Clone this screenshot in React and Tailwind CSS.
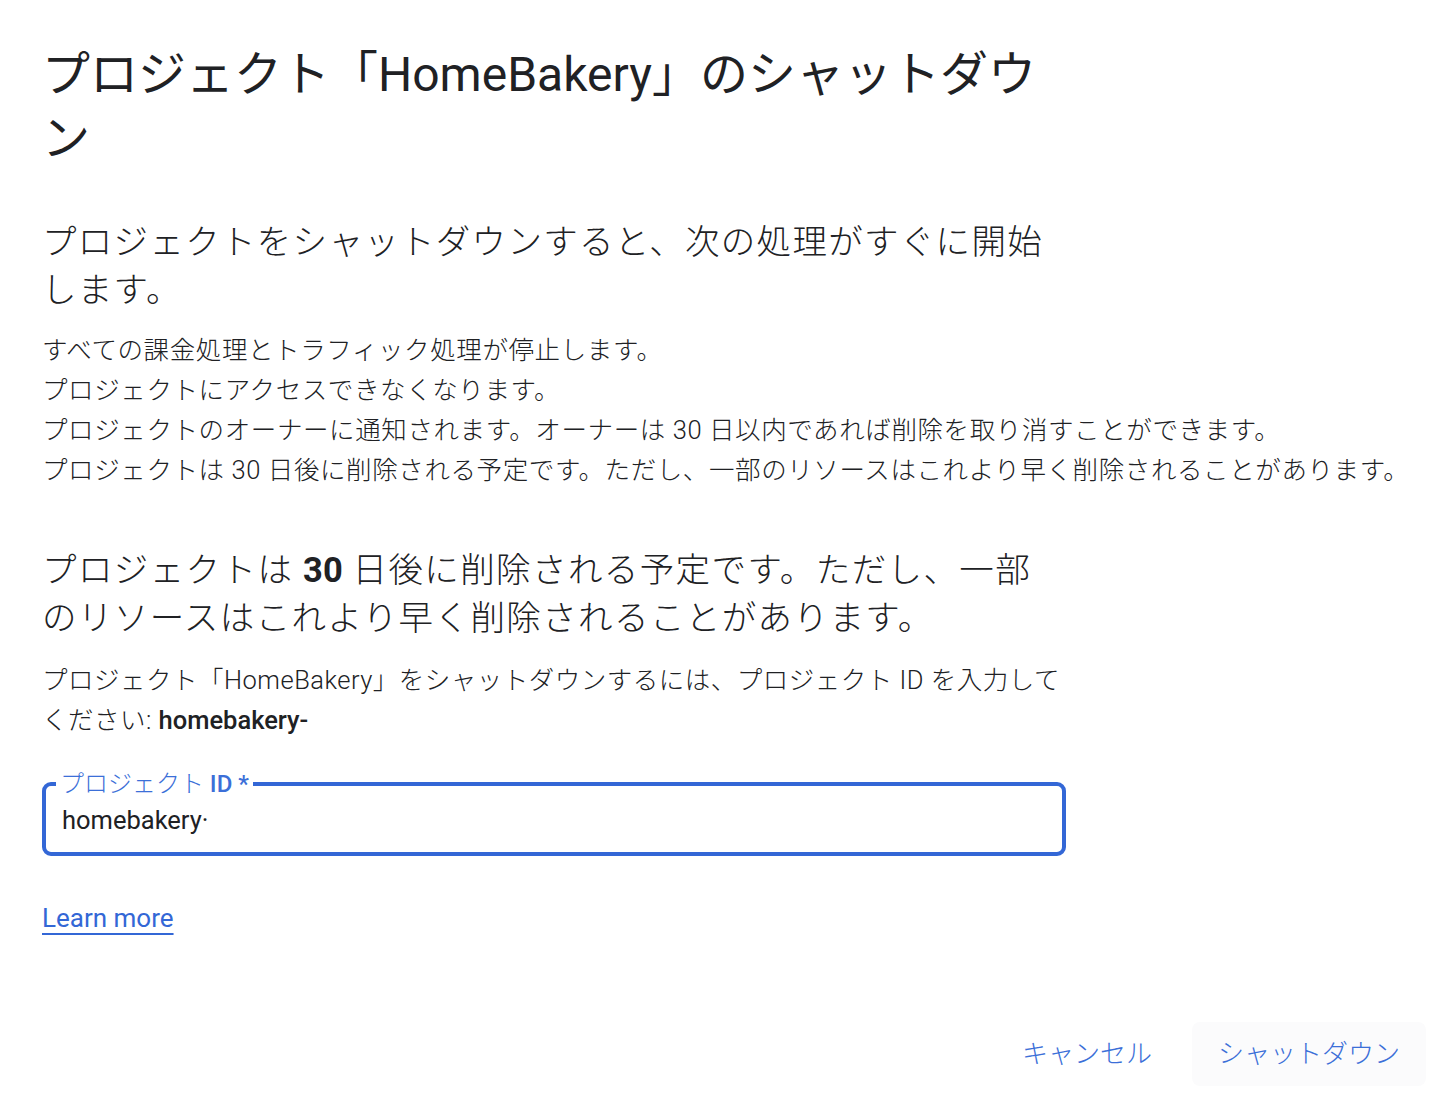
import React from 'react';

const font = { fontFamily: 'Roboto, "Noto Sans CJK JP", sans-serif' };

const App = () => {
  return (
    <div className="min-h-[1120px] bg-white text-[#202124]" style={font}>
      <div className="pl-[42px] pt-[43px]">
        {/* Title */}
        <h1 className="max-w-[1024px] text-[48px] leading-[64px] font-normal">
          プロジェクト「HomeBakery」のシャットダウン
        </h1>

        {/* What happens */}
        <h2 className="mt-[47px] text-[34.5px] leading-[48px] font-light tracking-[1.3px]">
          プロジェクトをシャットダウンすると、次の処理がすぐに開始
          <br />
          します。
        </h2>
        <div className="mt-[16px] text-[25.5px] leading-[40px] font-light tracking-[0.6px] text-[#202124]">
          <p>すべての課金処理とトラフィック処理が停止します。</p>
          <p>プロジェクトにアクセスできなくなります。</p>
          <p>プロジェクトのオーナーに通知されます。オーナーは 30 日以内であれば削除を取り消すことができます。</p>
          <p>プロジェクトは 30 日後に削除される予定です。ただし、一部のリソースはこれより早く削除されることがあります。</p>
        </div>

        <h2 className="mt-[56px] text-[34.5px] leading-[48px] font-light tracking-[1.4px]">
          プロジェクトは <span className="font-bold tracking-normal">30</span> 日後に削除される予定です。ただし、一部
          <br />
          のリソースはこれより早く削除されることがあります。
        </h2>

        <p className="mt-[18px] text-[25.5px] leading-[40px] font-light tracking-[0.5px] text-[#202124]">
          プロジェクト「HomeBakery」をシャットダウンするには、プロジェクト ID を入力して
          <br />
          ください: <span className="font-medium tracking-normal">homebakery-</span>
        </p>

        {/* Project ID field */}
        <fieldset className="mt-[30px] w-[1024px] h-[86px] border-4 border-[#3367d6] rounded-[9px] px-[16px] pt-[6px]">
          <legend className="ml-[-6px] px-[4px] text-[24px] leading-[28px] text-[#3b6fd8] font-light">
            プロジェクト <span className="font-medium">ID *</span>
          </legend>
          <div className="text-[25.5px] leading-[32px] text-[#202124]">homebakery·</div>
        </fieldset>

        <a href="#" className="inline-block mt-[46px] text-[26px] leading-[32px] text-[#3367d6] underline decoration-2 underline-offset-[6px]">
          Learn more
        </a>
      </div>

      {/* Actions */}
      <div className="flex justify-end gap-[14px] pr-[30px] mt-[88px]">
        <button className="h-[64px] px-[26px] rounded-lg text-[26px] font-light text-[#3b6fd8]">
          キャンセル
        </button>
        <button className="h-[64px] px-[26px] rounded-lg bg-[#fbfbfc] text-[26px] font-light text-[#3b6fd8]">
          シャットダウン
        </button>
      </div>
    </div>
  );
};

export default App;
